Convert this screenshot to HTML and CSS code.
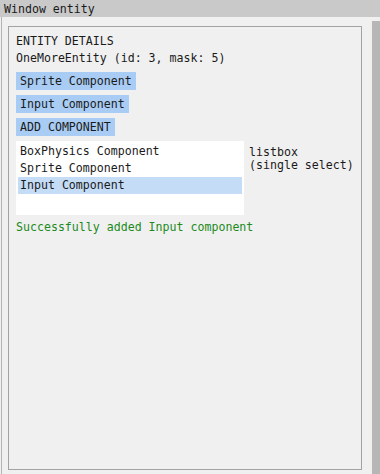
FILE: index.html
```html
<!DOCTYPE html>
<html lang="en">
<head>
  <meta charset="UTF-8">
  <title>Window entity</title>
  <link rel="stylesheet" href="styles.css">
</head>
<body>
  <div class="titlebar">Window entity</div>
  <div class="main">
    <div class="window">
      <div class="panel">
        <div class="line">ENTITY DETAILS</div>
        <div class="line">OneMoreEntity (id: 3, mask: 5)</div>

        <div class="buttons">
          <span class="btn">Sprite Component</span>
          <span class="btn">Input Component</span>
          <span class="btn">ADD COMPONENT</span>
        </div>

        <div class="list-row">
          <div class="listbox">
            <div class="item">BoxPhysics Component</div>
            <div class="item">Sprite Component</div>
            <div class="item selected">Input Component</div>
          </div>
          <div class="list-label">
            <div>listbox</div>
            <div>(single select)</div>
          </div>
        </div>

        <div class="status">Successfully added Input component</div>
      </div>
    </div>
    <div class="scrollbar"></div>
  </div>
</body>
</html>
```

FILE: styles.css
```css
html, body {
  height: 100%;
}

body {
  margin: 0;
  background: #f0f0f0;
  color: #1a1a1a;
  font-family: "DejaVu Sans Mono", monospace;
  font-size: 11.6px;
  display: flex;
  flex-direction: column;
  overflow: hidden;
}

.titlebar {
  height: 15px;
  padding: 2px 0 0 4px;
  line-height: 15px;
  background: #c9c9c9;
}

.main {
  flex: 1;
  display: flex;
}

.window {
  flex: 1;
  display: flex;
  flex-direction: column;
  margin-left: 1px;
  border-left: 1px solid #b4b4b4;
  padding: 9px 10px 4px 6px;
}

.scrollbar {
  width: 9px;
  margin-top: 4px;
  background: #b6b6b6;
}

.panel {
  flex: 1;
  border: 1px solid #a2a2a2;
  padding: 6px 7px 0;
}

.line {
  line-height: 17px;
}

.buttons {
  display: flex;
  flex-direction: column;
  align-items: flex-start;
  gap: 5px;
  margin-top: 5px;
}

.btn {
  display: block;
  padding: 0 4px;
  line-height: 18px;
  background: #a8ccf3;
}

.list-row {
  display: flex;
  align-items: flex-start;
  gap: 5px;
  margin-top: 5px;
}

.listbox {
  width: 224px;
  height: 72px;
  padding: 2px 2px 0;
  background: #fff;
}

.item {
  line-height: 17px;
  padding-left: 2px;
}

.item.selected {
  background: #c4dcf6;
}

.list-label {
  margin-top: 5px;
  line-height: 13px;
  white-space: nowrap;
}

.status {
  margin-top: 4px;
  line-height: 17px;
  color: #1c8a1c;
}
```
